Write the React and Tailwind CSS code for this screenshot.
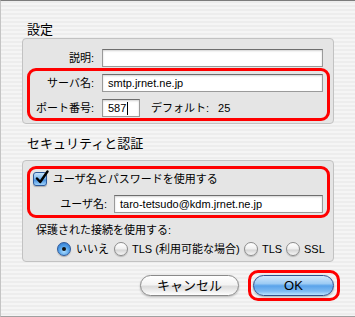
import React from 'react';

const FIELD =
  'h-[18px] bg-white border border-[#9a9a9a] border-t-[#6e6e6e] shadow-[inset_0_1px_2px_rgba(0,0,0,0.18)] flex items-center px-[5px] text-[11px] leading-none text-black';

function Field({ className = '', children }) {
  return <div className={`${FIELD} ${className}`}>{children}</div>;
}

function Radio({ checked }) {
  return checked ? (
    <div className="w-[14px] h-[14px] rounded-full border border-[#2d5a9c] bg-[radial-gradient(circle_at_50%_70%,#a9dcff_0%,#4c9be6_55%,#2f6fc4_100%)] flex items-center justify-center shadow-[0_1px_1px_rgba(0,0,0,0.25)] shrink-0">
      <div className="w-[4px] h-[4px] rounded-full bg-[#111]" />
    </div>
  ) : (
    <div className="w-[14px] h-[14px] rounded-full border border-[#8c8c8c] bg-[linear-gradient(to_bottom,#ffffff_0%,#f1f1f1_45%,#d6d6d6_60%,#f7f7f7_100%)] shadow-[0_1px_1px_rgba(0,0,0,0.2)] shrink-0" />
  );
}

export default function App() {
  return (
    <div className="w-[355px] h-[317px] overflow-hidden border-t border-b border-l border-t-[#7c7c7c] border-b-[#a0a0a0] border-l-[#c4c4c4] bg-[repeating-linear-gradient(to_bottom,#ededed_0px,#ededed_2px,#f5f5f5_2px,#f5f5f5_4px)] font-['Liberation_Sans','Noto_Sans_CJK_JP',sans-serif] text-black">
      {/* 設定 */}
      <div className="ml-[26px] mt-[20px] text-[13px] leading-[17px]">設定</div>
      <div className="ml-[21px] w-[312px] h-[86px] rounded-[4px] border border-[#c2c2c2] bg-[#e5e5e5] pt-[10px]">
        <div className="flex items-center">
          <div className="w-[71px] text-right text-[11px] leading-none">説明:</div>
          <Field className="ml-[8px] w-[221px]" />
        </div>
        <div className="ml-[4px] mr-[3px] mt-[1px] rounded-[9px] border-[3px] border-[#ff0000] pt-[3px] pb-[1px]">
          <div className="flex items-center">
            <div className="w-[64px] text-right text-[11px] leading-none">サーバ名:</div>
            <Field className="ml-[8px] w-[221px]">smtp.jrnet.ne.jp</Field>
          </div>
          <div className="flex items-center mt-[7px]">
            <div className="w-[64px] text-right text-[11px] leading-none">ポート番号:</div>
            <Field className="ml-[8px] w-[38px]">
              587<span className="ml-[1px] w-[1px] h-[13px] bg-black" />
            </Field>
            <div className="ml-[11px] text-[11px] leading-none">
              デフォルト:<span className="ml-[9px]">25</span>
            </div>
          </div>
        </div>
      </div>

      {/* セキュリティと認証 */}
      <div className="ml-[26px] mt-[11px] text-[13px] leading-[17px]">セキュリティと認証</div>
      <div className="ml-[21px] mt-[8px] w-[312px] h-[102px] rounded-[4px] border border-[#c2c2c2] bg-[#e5e5e5] pt-[5px]">
        <div className="ml-[4px] mr-[3px] rounded-[9px] border-[3px] border-[#ff0000] pt-[1px] pb-[2px]">
          <div className="flex items-center h-[18px]">
            <div className="ml-[3px] w-[14px] h-[14px] rounded-[3px] border border-[#2d5a9c] bg-[linear-gradient(to_bottom,#c6e4fb_0%,#7db8ee_45%,#4b94e0_60%,#9fd2fb_100%)] shadow-[0_1px_1px_rgba(0,0,0,0.25)] relative shrink-0">
              <svg className="absolute left-[1px] -top-[3px]" width="14" height="15" viewBox="0 0 14 15">
                <path d="M2 8.5 L5.2 12 L12.5 1.5" fill="none" stroke="#000" strokeWidth="2.4" strokeLinecap="round" strokeLinejoin="round" />
              </svg>
            </div>
            <div className="ml-[6px] text-[11px] leading-none">ユーザ名とパスワードを使用する</div>
          </div>
          <div className="flex items-center mt-[7px]">
            <div className="w-[77px] text-right text-[11px] leading-none">ユーザ名:</div>
            <Field className="ml-[7px] w-[209px] text-[10px]">taro-tetsudo@kdm.jrnet.ne.jp</Field>
          </div>
        </div>
        <div className="ml-[13px] mt-[4px] text-[11px] leading-[16px]">保護された接続を使用する:</div>
        <div className="flex items-center ml-[34px] mt-[4px] text-[11px] leading-none">
          <Radio checked />
          <span className="ml-[5px] w-[38px]">いいえ</span>
          <Radio />
          <span className="ml-[4px] w-[112px]">TLS (利用可能な場合)</span>
          <Radio />
          <span className="ml-[4px] w-[24px]">TLS</span>
          <Radio />
          <span className="ml-[4px]">SSL</span>
        </div>
      </div>

      {/* Buttons */}
      <div className="flex items-center mt-[8px] ml-[139px]">
        <div className="w-[99px] h-[21px] rounded-full border border-[#8a8a8a] bg-[linear-gradient(to_bottom,#ffffff_0%,#f4f4f4_45%,#dcdcdc_55%,#f2f2f2_85%,#ffffff_100%)] shadow-[0_1px_2px_rgba(0,0,0,0.25)] flex items-center justify-center text-[13px] leading-none">
          キャンセル
        </div>
        <div className="ml-[9px] w-[92px] h-[31px] rounded-[10px] border-[3px] border-[#ff0000] pl-[2px] pt-[2px]">
          <div className="w-[81px] h-[21px] rounded-full border border-[#2f4f8c] bg-[linear-gradient(to_bottom,#d2e8fb_0%,#9ccbf4_40%,#5aa3ea_52%,#7dbaf2_80%,#b9e3ff_100%)] shadow-[0_1px_2px_rgba(0,0,0,0.3)] flex items-center justify-center text-[13px] leading-none">
            OK
          </div>
        </div>
      </div>
    </div>
  );
}
